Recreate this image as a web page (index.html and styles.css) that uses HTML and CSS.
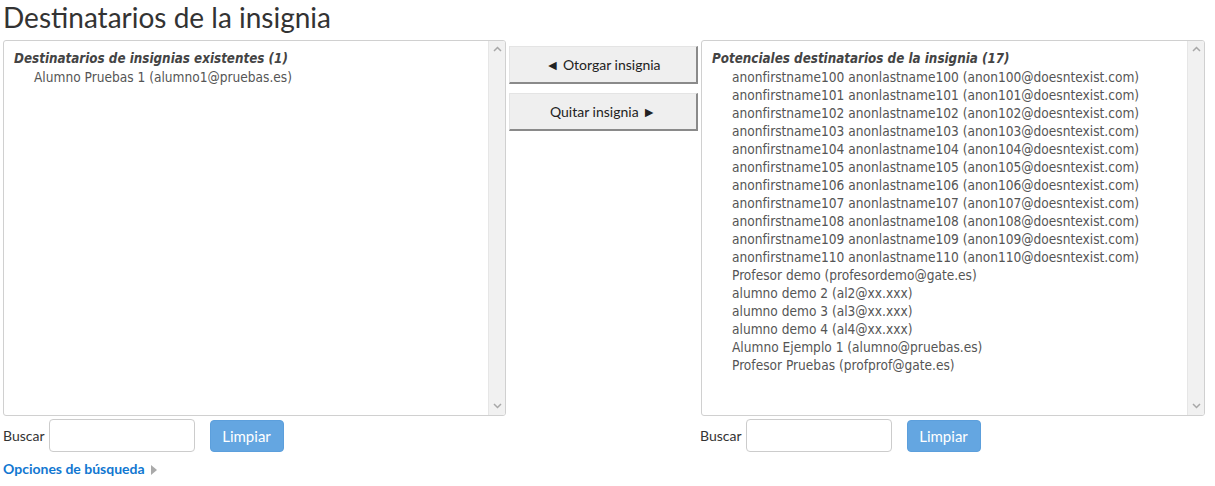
FILE: index.html
```html
<!DOCTYPE html>
<html lang="es">
<head>
<meta charset="utf-8">
<title>Destinatarios de la insignia</title>
<link rel="stylesheet" href="styles.css">
</head>
<body>
<h2 class="page-title">Destinatarios de la insignia</h2>
<div class="selector">
  <div class="col">
    <div class="listbox">
      <div class="list">
        <div class="group-title">Destinatarios de insignias existentes (1)</div>
        <div class="opt">Alumno Pruebas 1 (alumno1@pruebas.es)</div>
      </div>
      <div class="sbar">
        <svg class="arr" width="9" height="6" viewBox="0 0 9 6"><path d="M1 5 L4.5 1.5 L8 5" fill="none" stroke="#a8a8a8" stroke-width="1.5"/></svg>
        <svg class="arr" width="9" height="6" viewBox="0 0 9 6"><path d="M1 1 L4.5 4.5 L8 1" fill="none" stroke="#a8a8a8" stroke-width="1.5"/></svg>
      </div>
    </div>
  </div>
  <div class="actions">
    <button class="act">◄ Otorgar insignia</button>
    <button class="act">Quitar insignia ►</button>
  </div>
  <div class="col">
    <div class="listbox">
      <div class="list">
        <div class="group-title">Potenciales destinatarios de la insignia (17)</div>
        <div class="opt">anonfirstname100 anonlastname100 (anon100@doesntexist.com)</div>
        <div class="opt">anonfirstname101 anonlastname101 (anon101@doesntexist.com)</div>
        <div class="opt">anonfirstname102 anonlastname102 (anon102@doesntexist.com)</div>
        <div class="opt">anonfirstname103 anonlastname103 (anon103@doesntexist.com)</div>
        <div class="opt">anonfirstname104 anonlastname104 (anon104@doesntexist.com)</div>
        <div class="opt">anonfirstname105 anonlastname105 (anon105@doesntexist.com)</div>
        <div class="opt">anonfirstname106 anonlastname106 (anon106@doesntexist.com)</div>
        <div class="opt">anonfirstname107 anonlastname107 (anon107@doesntexist.com)</div>
        <div class="opt">anonfirstname108 anonlastname108 (anon108@doesntexist.com)</div>
        <div class="opt">anonfirstname109 anonlastname109 (anon109@doesntexist.com)</div>
        <div class="opt">anonfirstname110 anonlastname110 (anon110@doesntexist.com)</div>
        <div class="opt">Profesor demo (profesordemo@gate.es)</div>
        <div class="opt">alumno demo 2 (al2@xx.xxx)</div>
        <div class="opt">alumno demo 3 (al3@xx.xxx)</div>
        <div class="opt">alumno demo 4 (al4@xx.xxx)</div>
        <div class="opt">Alumno Ejemplo 1 (alumno@pruebas.es)</div>
        <div class="opt">Profesor Pruebas (profprof@gate.es)</div>
      </div>
      <div class="sbar">
        <svg class="arr" width="9" height="6" viewBox="0 0 9 6"><path d="M1 5 L4.5 1.5 L8 5" fill="none" stroke="#a8a8a8" stroke-width="1.5"/></svg>
        <svg class="arr" width="9" height="6" viewBox="0 0 9 6"><path d="M1 1 L4.5 4.5 L8 1" fill="none" stroke="#a8a8a8" stroke-width="1.5"/></svg>
      </div>
    </div>
  </div>
  <div class="search">
    <label class="lbl">Buscar</label>
    <span class="field"></span>
    <button class="clear">Limpiar</button>
  </div>
  <div></div>
  <div class="search">
    <label class="lbl">Buscar</label>
    <span class="field"></span>
    <button class="clear">Limpiar</button>
  </div>
</div>
<div class="options">Opciones de búsqueda <span class="tri"></span></div>
</body>
</html>
```
FILE: styles.css
```css
html, body {
  margin: 0;
  padding: 0;
  background: #fff;
}
body {
  padding: 0 3px;
  font-family: Lato, "Open Sans", sans-serif;
  color: #333;
}
.page-title {
  margin: 0;
  height: 40px;
  font-size: 28px;
  font-weight: 400;
  line-height: 34px;
  color: #333;
}
.selector {
  display: grid;
  grid-template-columns: 503px 189px 504px;
  column-gap: 3px;
  row-gap: 3px;
}
.selector > .col:last-of-type {
  margin-left: -1px;
}
.listbox {
  height: 376px;
  box-sizing: border-box;
  border: 1px solid #d0d0d0;
  border-radius: 3px;
  display: flex;
  overflow: hidden;
  background: #fff;
}
.list {
  flex: 1;
  padding: 9px 0 0 10px;
  font-family: "DejaVu Sans Condensed", "DejaVu Sans", sans-serif;
  font-stretch: condensed;
  font-size: 13.3px;
  line-height: 18px;
  color: #555;
}
.group-title {
  font-weight: bold;
  font-style: italic;
  color: #444;
}
.opt {
  padding-left: 20px;
  white-space: nowrap;
  font-size: 13.6px;
}
.sbar {
  width: 16px;
  background: #f1f1f1;
  border-left: 1px solid #e6e6e6;
  display: flex;
  flex-direction: column;
  justify-content: space-between;
  align-items: center;
  padding: 5px 0 6px;
}
.actions {
  display: flex;
  flex-direction: column;
  gap: 9px;
  padding-top: 6px;
}
.act {
  height: 38px;
  width: 189px;
  margin: 0;
  background: #efefef;
  border: 1px solid #e4e4e4;
  border-right: 2px solid #8a8a8a;
  border-bottom: 2px solid #8a8a8a;
  font-family: Lato, sans-serif;
  font-size: 14px;
  color: #222;
  padding: 0;
}
.search {
  display: flex;
  align-items: flex-start;
}
.selector > .search:last-child {
  margin-left: -1px;
}
.lbl {
  font-size: 14px;
  line-height: 33px;
  color: #333;
  margin-right: 4px;
}
.field {
  width: 146px;
  height: 33px;
  box-sizing: border-box;
  border: 1px solid #ccc;
  border-radius: 4px;
  margin-right: 15px;
}
.clear {
  width: 74px;
  height: 32px;
  margin-top: 1px;
  background: #64a6e1;
  border: 1px solid #5c9fdc;
  border-radius: 4px;
  color: #fff;
  font-family: Lato, sans-serif;
  font-size: 15px;
  padding: 0;
}
.options {
  margin-top: 8px;
  font-size: 14px;
  font-weight: bold;
  color: #1177d1;
  display: flex;
  align-items: center;
  gap: 6px;
}
.tri {
  width: 0;
  height: 0;
  border-left: 6px solid #aaa;
  border-top: 5px solid transparent;
  border-bottom: 5px solid transparent;
  margin-top: 2px;
}
```
